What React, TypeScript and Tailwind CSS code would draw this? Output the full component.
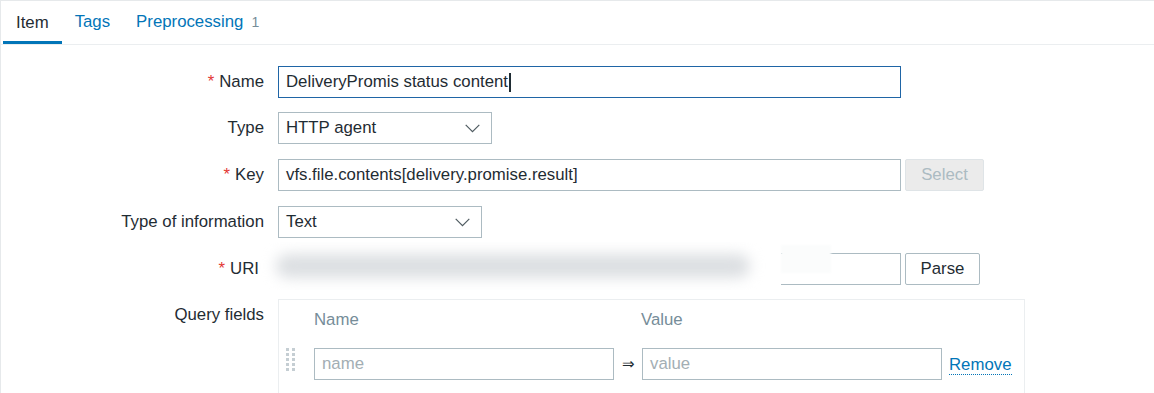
const font = { fontFamily: '"Liberation Sans", Arial, sans-serif' };

function Label({ text, required, className = '' }: { text: string; required?: boolean; className?: string }) {
  return (
    <div className={`w-[263px] shrink-0 text-right text-[16.8px] text-[#1f2c33] leading-[32px] ${className}`}>
      {required && <span className="text-[#e33734] mr-[5px]">*</span>}
      {text}
    </div>
  );
}

function Chevron() {
  return (
    <svg width="15" height="9" viewBox="0 0 15 9" fill="none">
      <path d="M0.7 0.8 L7.5 7.6 L14.3 0.8" stroke="#4f5b61" strokeWidth="1.2" />
    </svg>
  );
}

function Select({ value, width }: { value: string; width: string }) {
  return (
    <div className={`${width} h-[32px] border border-[#acbbc2] bg-white flex items-center justify-between pl-[7px] pr-[11px] text-[16.8px] text-[#1f2c33]`}>
      <span>{value}</span>
      <Chevron />
    </div>
  );
}

function DragHandle() {
  return (
    <svg width="10" height="25" viewBox="0 0 10 25" className="mt-[-7px]">
      {[0, 5, 10, 15, 20].map((y) => (
        <g key={y} fill="#c5ced3">
          <rect x="0" y={y} width="3" height="3" />
          <rect x="6" y={y} width="3" height="3" />
        </g>
      ))}
    </svg>
  );
}

export default function App() {
  return (
    <div className="w-[1154px] h-[393px] bg-white overflow-hidden border-t border-l border-[#e6e9eb]" style={font}>
      <div className="flex h-[44px] border-b border-[#ebeef0] pl-[2px]">
        <div className="px-[13px] h-full flex items-center border-b-[3px] border-[#0275b8] pt-[3px] text-[16.8px] text-[#1f2c33]">Item</div>
        <div className="px-[13px] h-full flex items-center pb-[1px] text-[16.8px] text-[#0275b8]">Tags</div>
        <div className="px-[13px] h-full flex items-center pb-[1px] text-[16.8px] text-[#0275b8]">
          Preprocessing
          <span className="ml-[8px] text-[14px] text-[#768d99]">1</span>
        </div>
      </div>

      <div className="flex flex-col">
        <div className="flex items-center gap-[14px] mt-[21px]">
          <Label text="Name" required />
          <div className="w-[623px] h-[32px] border border-[#1f65a6] flex items-center pl-[7px] text-[16.8px] text-[#1f2c33]">
            DeliveryPromis status content
            <span className="w-[2px] h-[19px] bg-[#1f2c33] ml-[1px]" />
          </div>
        </div>

        <div className="flex items-center gap-[14px] mt-[14px]">
          <Label text="Type" />
          <Select value="HTTP agent" width="w-[214px]" />
        </div>

        <div className="flex items-center gap-[14px] mt-[15px]">
          <Label text="Key" required />
          <div className="w-[623px] h-[32px] border border-[#acbbc2] flex items-center pl-[7px] text-[16.8px] text-[#1f2c33]">
            vfs.file.contents[delivery.promise.result]
          </div>
          <div className="ml-[-10px] w-[79px] h-[32px] rounded-[2px] border border-[#dfe4e7] bg-[#ebebeb] flex items-center justify-center text-[16.8px] text-[#acbbc2]">
            Select
          </div>
        </div>

        <div className="flex items-center gap-[14px] mt-[15px]">
          <Label text="Type of information" />
          <Select value="Text" width="w-[204px]" />
        </div>

        <div className="relative flex items-center gap-[14px] mt-[15px]">
          <Label text="URI" required className="pr-[5px]" />
          <div className="w-[623px] h-[32px] border border-[#acbbc2]" />
          <div className="ml-[-10px] w-[75px] h-[32px] rounded-[2px] border border-[#acbbc2] bg-white flex items-center justify-center text-[16.8px] text-[#1f2c33]">
            Parse
          </div>
          <div className="absolute left-[259px] top-[-11px] w-[521px] h-[48px] bg-white overflow-hidden">
            <div className="absolute left-[16px] top-[12px] w-[474px] h-[24px] rounded-full bg-[#dcdfe2] blur-[7px]" />
          </div>
          <div className="absolute left-[780px] top-[-8px] w-[50px] h-[28px] bg-[#fbfcfc] blur-[1px]" />
        </div>

        <div className="flex items-start gap-[14px] mt-[14px]">
          <Label text="Query fields" />
          <div className="w-[747px] h-[100px] border border-[#ebeef0] pl-[7px] pt-[8px]">
            <div className="flex text-[16.8px] text-[#768d99] leading-[24px] pl-[28px]">
              <div className="w-[327px]">Name</div>
              <div>Value</div>
            </div>
            <div className="flex items-center mt-[16px]">
              <DragHandle />
              <div className="ml-[18px] w-[300px] h-[32px] border border-[#acbbc2] flex items-center pl-[7px] text-[16.8px] text-[#a3aeb4]">name</div>
              <div className="w-[28px] text-center text-[15px] text-[#1f2c33]">⇒</div>
              <div className="w-[300px] h-[32px] border border-[#acbbc2] flex items-center pl-[7px] text-[16.8px] text-[#a3aeb4]">value</div>
              <div className="ml-[7px] text-[16.8px] text-[#0275b8] border-b border-dotted border-[#0275b8] leading-[18px] mt-[2px]">Remove</div>
            </div>
          </div>
        </div>
      </div>
    </div>
  );
}
